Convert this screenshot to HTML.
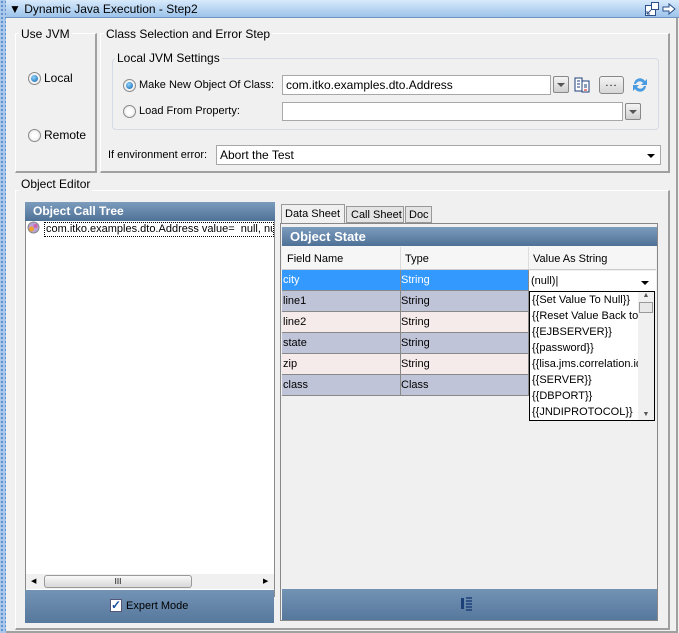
<!DOCTYPE html>
<html><head><style>
*{margin:0;padding:0;box-sizing:border-box}
body{width:679px;height:633px;overflow:hidden;background:#f0f0f0;font-family:"Liberation Sans",Tahoma,sans-serif;font-size:11px;color:#000;position:relative}
.a{position:absolute;white-space:nowrap}
.box{position:absolute;border-top:1px solid #fff;border-left:1px solid #fff;border-right:2px solid #a0a0a0;border-bottom:2px solid #a0a0a0}
.lbl{position:absolute;background:#f0f0f0;padding:0 2px;white-space:nowrap}
.tf{position:absolute;background:#fff;border:1px solid #a8a8a8;padding:3px 3px;white-space:nowrap;overflow:hidden}
.radio{position:absolute;width:13px;height:13px;border-radius:50%;border:1px solid #8a8a8a;background:radial-gradient(circle,#fff 30%,#ddd)}
.radio.on::after{content:"";position:absolute;left:2px;top:2px;width:7px;height:7px;border-radius:50%;background:radial-gradient(circle at 40% 35%,#8fd3ff,#0a5fa8)}
.db{position:absolute;width:16px;height:17px;border:1px solid #888;border-radius:2px;background:linear-gradient(#f4f4f4,#cfcfcf)}
.db::after{content:"";position:absolute;left:3px;top:6px;border-left:4px solid transparent;border-right:4px solid transparent;border-top:4px solid #555}
.hdr{position:absolute;background:linear-gradient(#7c9cbd,#4e7196);color:#fff;font-weight:bold;font-size:12px;padding:2px 8px;white-space:nowrap}
.row{position:absolute;left:282px;width:246px;height:21px;border-bottom:1px solid #888}
.row span{position:absolute;top:4px}
</style></head><body>
<div class="a" style="left:0;top:0;width:6px;height:633px;background:#a9c8ec;background-image:radial-gradient(#4c80c0 0.8px,transparent 1px);background-size:4px 4px"></div>
<div class="a" style="left:6px;top:0;width:673px;height:18px;background:linear-gradient(#d8eafc,#9cc3ea);border-bottom:1px solid #6f95c0"></div>
<div class="a" style="left:9px;top:2px;font-size:12px">▼ Dynamic Java Execution - Step2</div>
<svg class="a" style="left:644px;top:1px" width="34" height="17"><rect x="1.5" y="4.5" width="10" height="10" fill="#fff" stroke="#2a4f8a"/><rect x="7.5" y="1.5" width="7" height="7" fill="#fff" stroke="#2a4f8a"/><path d="M3 13 L7 9 M3 13h3M3 13v-3" stroke="#2a4f8a"/><path d="M19 6h6v-3l6 5-6 5v-3h-6z" fill="#fff" stroke="#2a4f8a"/></svg>
<div class="a" style="left:676px;top:18px;width:2px;height:615px;background:#a0a0a0"></div>
<div class="a" style="left:6px;top:631px;width:672px;height:2px;background:#a0a0a0"></div>

<div class="box" style="left:15px;top:33px;width:82px;height:140px"></div>
<div class="lbl" style="left:19px;top:27px;font-size:12px">Use JVM</div>
<div class="radio on" style="left:28px;top:72px"></div><div class="a" style="left:44px;top:71px;font-size:12px">Local</div>
<div class="radio" style="left:28px;top:129px"></div><div class="a" style="left:44px;top:128px;font-size:12px">Remote</div>

<div class="box" style="left:100px;top:33px;width:570px;height:140px"></div>
<div class="lbl" style="left:104px;top:27px;font-size:12px">Class Selection and Error Step</div>
<div class="a" style="left:112px;top:58px;width:547px;height:72px;border:1px solid #d4dbe4;border-radius:4px"></div>
<div class="lbl" style="left:115px;top:51px;font-size:12px">Local JVM Settings</div>
<div class="radio on" style="left:123px;top:79px"></div><div class="a" style="left:139px;top:79px">Make New Object Of Class:</div>
<div class="tf" style="left:282px;top:75px;width:269px;height:20px;font-size:12px;padding-top:2px">com.itko.examples.dto.Address</div>
<div class="db" style="left:553px;top:76px"></div>
<svg class="a" style="left:574px;top:77px" width="17" height="16"><rect x="1" y="1" width="7" height="13" fill="#fff" stroke="#1c3f7a"/><rect x="8" y="4" width="7" height="11" fill="#fff" stroke="#1c3f7a"/><path d="M3 4h3M3 7h3M3 10h3M10 8h3M10 10h3" stroke="#1c3f7a"/><path d="M10 13h3" stroke="#d00"/></svg>
<div class="a" style="left:599px;top:76px;width:25px;height:18px;border:1px solid #888;border-radius:3px;background:linear-gradient(#f4f4f4,#d6d6d6);text-align:center;font-size:11px;line-height:12px;letter-spacing:1px">...</div>
<svg class="a" style="left:631px;top:76px" width="18" height="18"><path d="M3 8a6 6 0 0 1 11-3l2-2v6h-6l2-2a4 4 0 0 0-7 1z" fill="#4a9be0"/><path d="M15 10a6 6 0 0 1-11 3l-2 2v-6h6l-2 2a4 4 0 0 0 7-1z" fill="#4a9be0"/></svg>
<div class="radio" style="left:123px;top:105px"></div><div class="a" style="left:139px;top:105px">Load From Property:</div>
<div class="tf" style="left:282px;top:102px;width:341px;height:19px"></div>
<div class="db" style="left:625px;top:103px"></div>
<div class="a" style="left:108px;top:149px">If environment error:</div>
<div class="tf" style="left:216px;top:145px;width:445px;height:20px;font-size:12px;padding-top:2px">Abort the Test</div>
<div class="a" style="left:647px;top:154px;border-left:4px solid transparent;border-right:4px solid transparent;border-top:4px solid #000"></div>

<div class="box" style="left:15px;top:190px;width:655px;height:440px"></div>
<div class="lbl" style="left:19px;top:177px;font-size:12px">Object Editor</div>

<div class="a" style="left:25px;top:202px;width:250px;height:395px;background:#fff;border:1px solid #8a8a8a"></div>
<div class="hdr" style="left:25px;top:202px;width:250px;height:19px">Object Call Tree</div>
<svg class="a" style="left:27px;top:221px" width="13" height="13"><circle cx="6.5" cy="6.5" r="5.5" fill="#b9a2d8" stroke="#888"/><circle cx="4.5" cy="8" r="2.5" fill="#f0a030"/><circle cx="8.5" cy="5" r="2" fill="#d060b0"/></svg>
<div class="a" style="left:44px;top:222px;width:230px;height:15px;border:1px dotted #000;overflow:hidden;padding-left:1px;line-height:13px">com.itko.examples.dto.Address value=&nbsp; null, null</div>
<div class="a" style="left:26px;top:574px;width:248px;height:15px;background:#f0f0f0"></div>
<div class="a" style="left:44px;top:575px;width:148px;height:13px;border:1px solid #999;border-radius:3px;background:linear-gradient(#f8f8f8,#d8d8d8);text-align:center;font-size:8px;line-height:11px">III</div>
<div class="a" style="left:31px;top:577px;font-size:7px">◀</div><div class="a" style="left:263px;top:577px;font-size:7px">▶</div>
<div class="a" style="left:25px;top:590px;width:249px;height:33px;background:linear-gradient(#7393b5,#56789c)"></div>
<div class="a" style="left:110px;top:599px;width:12px;height:13px;border:1px solid #557;background:#fff;color:#1a4fa0;font-size:12px;line-height:11px;text-align:center;font-weight:bold">✓</div>
<div class="a" style="left:126px;top:600px">Expert Mode</div>

<div class="a" style="left:281px;top:204px;width:64px;height:20px;border:1px solid #999;border-bottom:none;background:#f0f0f0;padding:3px 3px">Data Sheet</div>
<div class="a" style="left:346px;top:206px;width:58px;height:17px;border:1px solid #999;background:#e4e4e4;padding:2px 4px">Call Sheet</div>
<div class="a" style="left:405px;top:206px;width:27px;height:17px;border:1px solid #999;background:#e4e4e4;padding:2px 3px">Doc</div>
<div class="a" style="left:280px;top:223px;width:378px;height:398px;border:1px solid #888;background:#f0f0f0"></div>
<div class="hdr" style="left:282px;top:227px;width:375px;height:19px;font-size:13px">Object State</div>
<div class="a" style="left:282px;top:246px;width:374px;height:24px;background:#f6f6f6;border-bottom:1px solid #ccc"></div>
<div class="a" style="left:287px;top:253px">Field Name</div><div class="a" style="left:405px;top:253px">Type</div><div class="a" style="left:533px;top:253px">Value As String</div>
<div class="a" style="left:400px;top:247px;width:1px;height:22px;background:#ddd"></div><div class="a" style="left:528px;top:247px;width:1px;height:22px;background:#ddd"></div>
<div class="row" style="top:270px;background:#3399ff;color:#fff"><span style="left:1px">city</span><span style="left:119px">String</span></div>
<div class="row" style="top:291px;background:#c0c4d8"><span style="left:1px">line1</span><span style="left:119px">String</span></div>
<div class="row" style="top:312px;background:#f6ebeb"><span style="left:1px">line2</span><span style="left:119px">String</span></div>
<div class="row" style="top:333px;background:#c0c4d8"><span style="left:1px">state</span><span style="left:119px">String</span></div>
<div class="row" style="top:354px;background:#f6ebeb"><span style="left:1px">zip</span><span style="left:119px">String</span></div>
<div class="row" style="top:375px;background:#c0c4d8"><span style="left:1px">class</span><span style="left:119px">Class</span></div>
<div class="a" style="left:400px;top:270px;width:1px;height:126px;background:#888"></div>
<div class="a" style="left:528px;top:270px;width:1px;height:126px;background:#888"></div>
<div class="a" style="left:529px;top:271px;width:127px;height:20px;background:#fff;padding:4px 2px">(null)|</div>
<div class="a" style="left:641px;top:281px;border-left:4px solid transparent;border-right:4px solid transparent;border-top:4px solid #000"></div>
<div class="a" style="left:529px;top:291px;width:126px;height:130px;background:#fff;border:1px solid #000;overflow:hidden;line-height:16px;padding-left:2px">
{{Set Value To Null}}<br>{{Reset Value Back to<br>{{EJBSERVER}}<br>{{password}}<br>{{lisa.jms.correlation.id<br>{{SERVER}}<br>{{DBPORT}}<br>{{JNDIPROTOCOL}}</div>
<div class="a" style="left:638px;top:292px;width:16px;height:128px;background:#f0f0f0;font-size:7px;text-align:center;color:#555">▲<div style="margin:3px 1px;height:11px;border:1px solid #999;background:#e8e8e8"></div><div style="position:absolute;bottom:2px;width:16px">▼</div></div>
<div class="a" style="left:282px;top:589px;width:375px;height:31px;background:linear-gradient(#7393b5,#56789c)"></div>
<svg class="a" style="left:460px;top:596px" width="14" height="16"><rect x="1" y="2" width="3" height="11" fill="#1c3f7a"/><path d="M6 2h6M6 5h6M6 8h6M6 11h6M6 14h6" stroke="#1c3f7a" stroke-width="1.5"/></svg>
</body></html>
